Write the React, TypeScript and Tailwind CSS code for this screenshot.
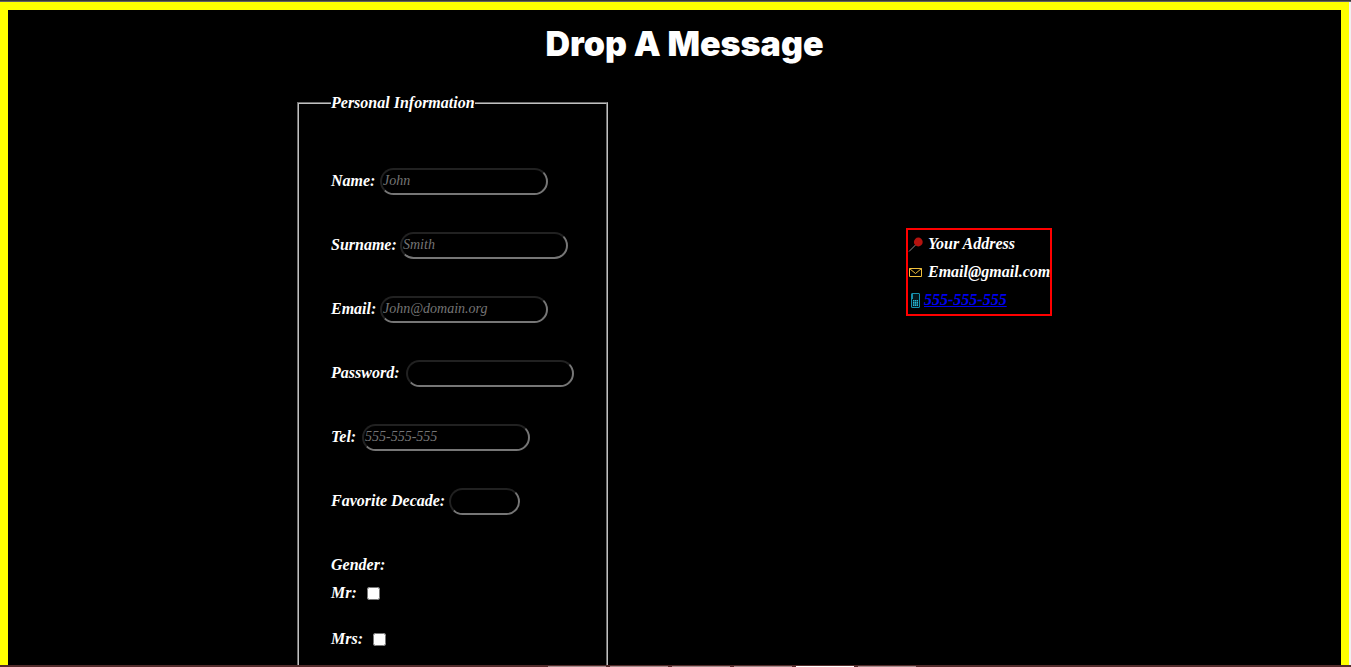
import React from "react";

const fields = [
  { id: "name", label: "Name:", type: "text", placeholder: "John", labelWidth: "w-[49px]", width: "w-[168px]" },
  { id: "surname", label: "Surname:", type: "text", placeholder: "Smith", labelWidth: "w-[69px]", width: "w-[168px]" },
  { id: "email", label: "Email:", type: "email", placeholder: "John@domain.org", labelWidth: "w-[49px]", width: "w-[168px]" },
  { id: "password", label: "Password:", type: "password", placeholder: "", labelWidth: "w-[75px]", width: "w-[168px]" },
  { id: "tel", label: "Tel:", type: "tel", placeholder: "555-555-555", labelWidth: "w-[31px]", width: "w-[168px]" },
  { id: "decade", label: "Favorite Decade:", type: "number", placeholder: "", labelWidth: "w-[118px]", width: "w-[71px]" },
];

function Pin() {
  return (
    <svg className="h-4 w-4 shrink-0" viewBox="0 0 16 16" aria-hidden="true">
      <path d="M1 15.5 L8 8.5" stroke="#8a8a8a" strokeWidth="1" />
      <circle cx="10.3" cy="6" r="4.4" fill="#b4130f" />
    </svg>
  );
}

function Envelope() {
  return (
    <svg className="h-4 w-4 shrink-0" viewBox="0 0 16 16" fill="none" stroke="#f0c03c" aria-hidden="true">
      <path d="M1.5 4.5h12v8h-12z M1.5 4.5l6 5 6-5" />
    </svg>
  );
}

function Phone() {
  return (
    <svg className="h-4 w-4 shrink-0" viewBox="0 0 16 16" aria-hidden="true">
      <rect x="3.5" y="1.5" width="8" height="14" rx="0.5" fill="#04161c" stroke="#168fac" />
      <path d="M4.5 1v6" stroke="#168fac" />
      <path d="M5 8h5v6H5z" fill="#27b5d2" />
      <path d="M5 9.5h5M5 12h5M6.5 8v6M8.5 8v6" stroke="#04161c" strokeWidth="0.5" />
    </svg>
  );
}

export default function App() {
  return (
    <div className="flex h-screen flex-col overflow-hidden bg-black text-white">
      <div className="h-[2px] shrink-0 border-b border-[#625f66] bg-[#353535]" />
      <div className="min-h-0 flex-1 overflow-hidden border-r-2 border-[#f1f1f1]">
        <main className="min-h-full border-8 border-b-0 border-[yellow] font-['Liberation_Serif',serif] text-base leading-7 font-bold italic">
          <h1 className="pt-3 pl-5 text-center font-['Inter',sans-serif] text-[34px] leading-[44px] font-black not-italic">
            Drop A Message
          </h1>
          <div className="flex items-start justify-evenly gap-[9px] pt-[23px]">
            <form>
              <fieldset className="w-[311px] border-2 [border-style:groove] border-[#c0c0c0] px-8 pb-8">
                <legend className="whitespace-nowrap">Personal Information</legend>
                <div className="flex flex-col gap-9 pt-[50px]">
                  {fields.map((f) => (
                    <div key={f.id} className="flex h-7 items-center">
                      <label htmlFor={f.id} className={`${f.labelWidth} shrink-0 whitespace-nowrap`}>
                        {f.label}
                      </label>
                      <input
                        id={f.id}
                        type={f.type}
                        placeholder={f.placeholder}
                        className={`${f.width} h-[27px] rounded-[15px] border-2 [border-style:inset] border-[#767676] bg-black px-px text-sm font-normal placeholder:text-[#757575]`}
                      />
                    </div>
                  ))}
                  <div>
                    <p>Gender:</p>
                    <div className="flex flex-col gap-[18px]">
                      <div className="flex items-center gap-1">
                        <label htmlFor="mr" className="w-8">Mr:</label>
                        <input id="mr" type="checkbox" className="size-[13px]" />
                      </div>
                      <div className="flex items-center gap-1">
                        <label htmlFor="mrs" className="w-[38px]">Mrs:</label>
                        <input id="mrs" type="checkbox" className="size-[13px]" />
                      </div>
                    </div>
                  </div>
                </div>
              </fieldset>
            </form>
            <address className="mt-[139px] w-[146px] border-2 border-[red] whitespace-nowrap">
              <p className="flex items-center gap-1"><Pin />Your Address</p>
              <p className="flex items-center gap-1"><Envelope />Email@gmail.com</p>
              <p className="flex items-center">
                <Phone />
                <a href="tel:555555555" className="text-[#0000ee] underline">555-555-555</a>
              </p>
            </address>
          </div>
        </main>
      </div>
      <div className="flex h-[2px] shrink-0 items-end justify-center gap-1 bg-[#532b2b] pl-[113px]">
        <span className="h-px w-[58px] bg-[#a38b8b]" />
        <span className="h-px w-[58px] bg-[#a38b8b]" />
        <span className="h-px w-[58px] bg-[#a38b8b]" />
        <span className="h-px w-[58px] bg-[#a38b8b]" />
        <span className="h-px w-[58px] bg-white" />
        <span className="h-px w-[58px] bg-[#a38b8b]" />
      </div>
    </div>
  );
}
